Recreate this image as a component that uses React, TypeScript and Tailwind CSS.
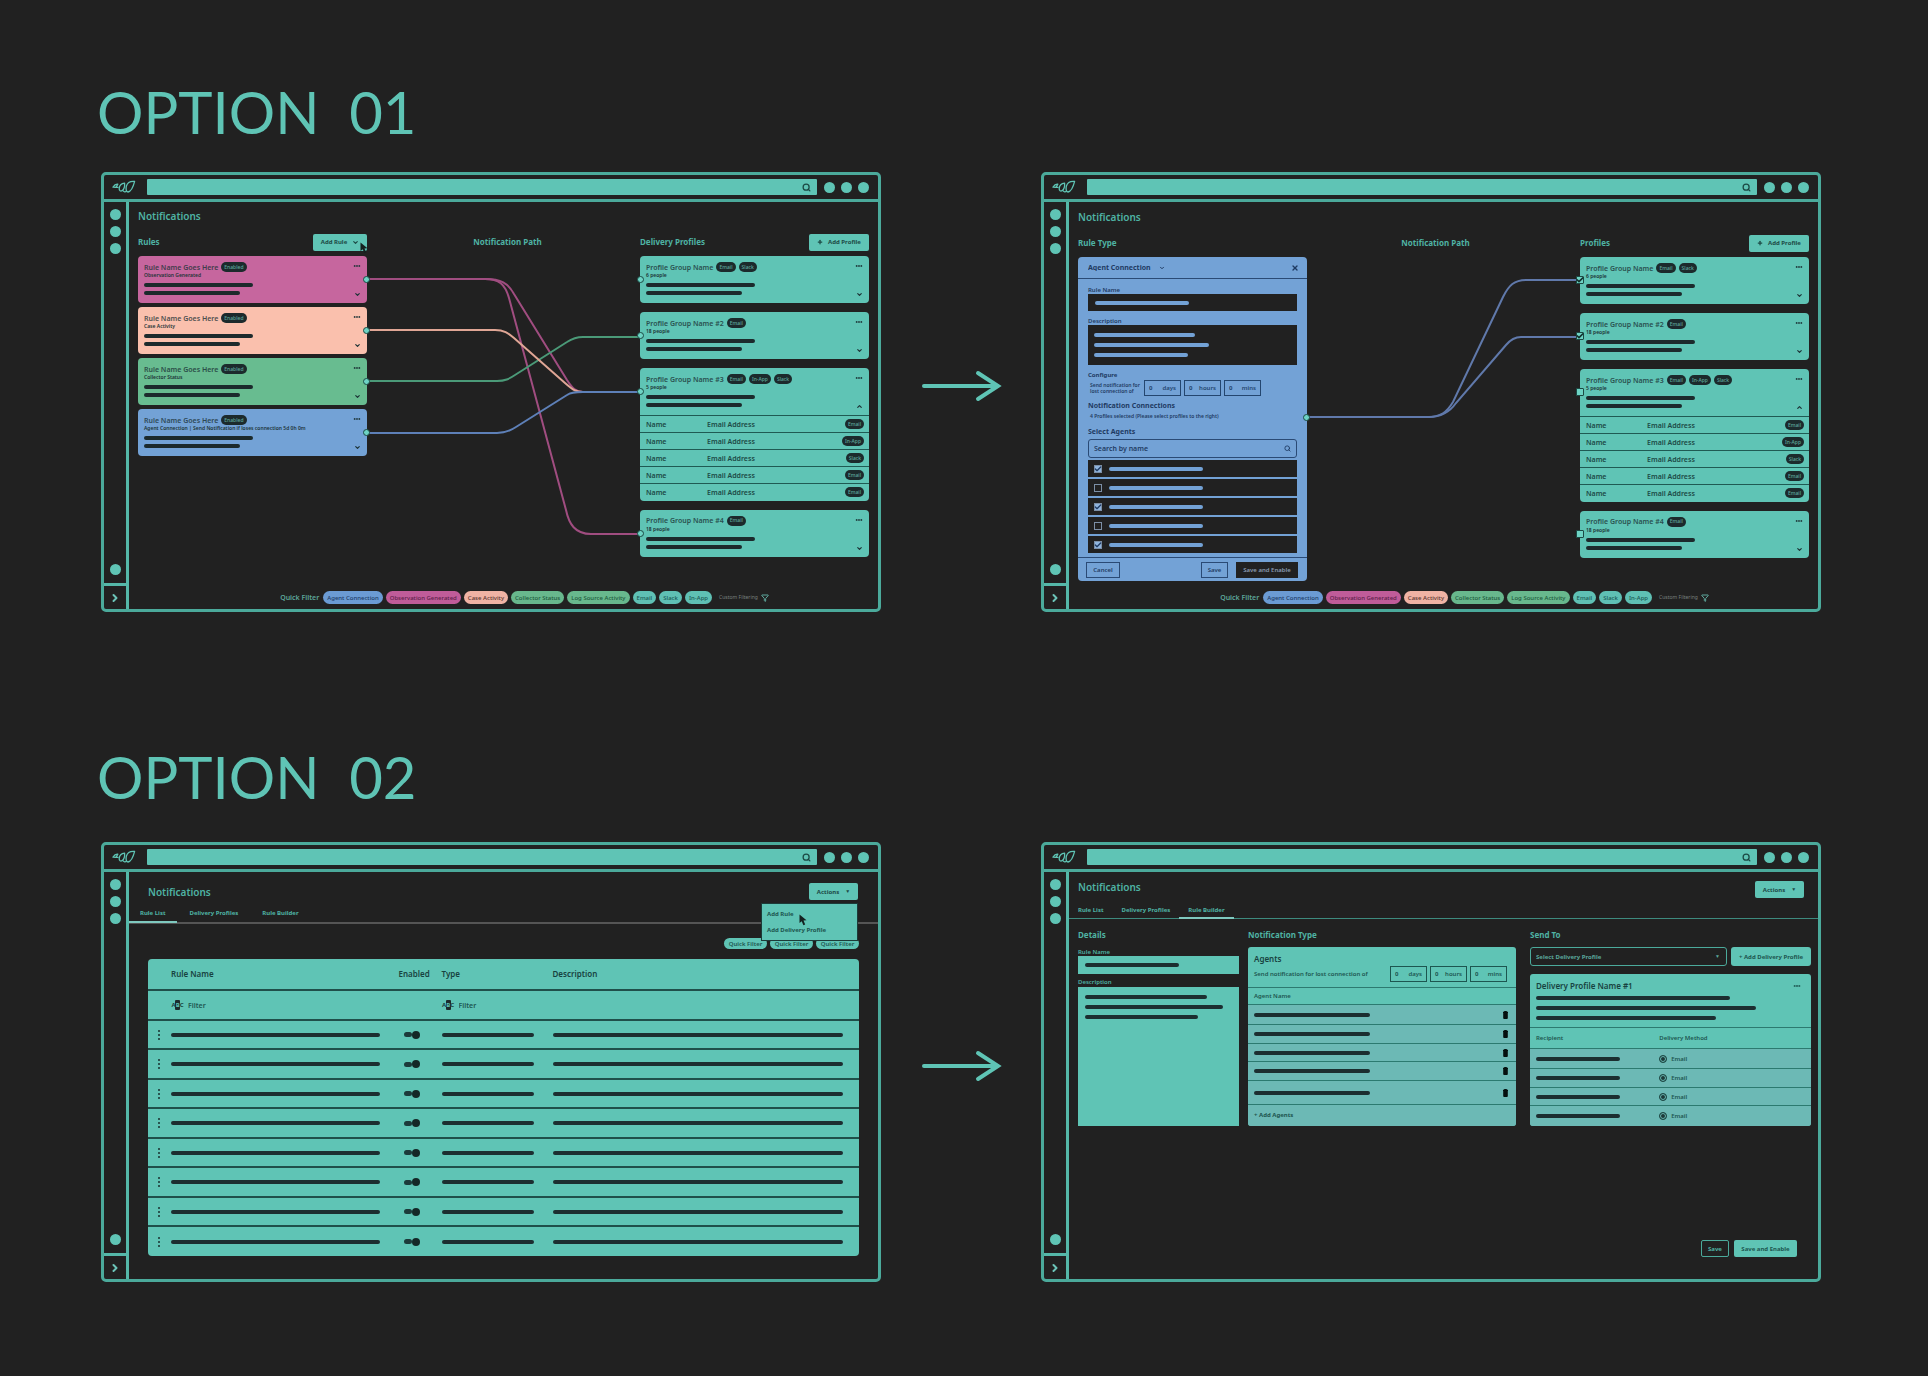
import React from 'react';
import { Check, ChevronDown, ChevronRight, ChevronUp, Filter, MoreHorizontal, Plus, Search, X } from 'lucide-react';

/* ---------- small shared pieces ---------- */

function Bar({ className = '' }: { className?: string }) {
  return <div className={`h-1 max-w-full rounded-full ${className}`} />;
}

function Pill({ children }: { children: React.ReactNode }) {
  return (
    <span className="inline-flex h-[10px] items-center rounded-full bg-[#1c2a2c] px-[3px] text-[5px] leading-none font-medium text-[#5fa89d]">
      {children}
    </span>
  );
}

function Dot() {
  return <span className="block size-[11px] rounded-full bg-[#5fc4b5]" />;
}

function Cursor({ className }: { className: string }) {
  return (
    <svg viewBox="0 0 8 12" className={`pointer-events-none absolute h-3 w-2 ${className}`} aria-hidden>
      <path d="M0.5 0.5 L0.5 9 L2.7 7.2 L4.4 11.3 L6.2 10.5 L4.5 6.6 L7.5 6.3 Z" fill="#14211f" />
    </svg>
  );
}

function Logo() {
  return (
    <svg viewBox="0 0 24 14" className="h-[14px] w-6" fill="none" stroke="#5fc4b5" strokeWidth="1.3" strokeLinejoin="round" aria-label="Logo">
      <path d="M1 7.2 C2.5 4.8 4.5 4 5.8 4.2 C5.2 5.4 4.6 6.4 3.6 7.4 Z M3.8 7.2 L6.6 7.4" />
      <path d="M12.6 3.2 C9.4 3.6 7.4 6 7.2 8.4 C7 10.6 8.6 11.8 10.2 10.6 C12.2 9.2 12.8 6.4 12.6 3.2 Z" />
      <path d="M22.6 1.4 C18.4 1 15.4 2.6 14.4 6 C13.6 9 14.2 11.8 16 12 C18.6 11.6 21.2 7 22.6 1.4 Z" />
      <path d="M11 10.6 C11.6 12 13.4 12.4 14.6 11" />
    </svg>
  );
}

function Arrow({ className = '' }: { className?: string }) {
  return (
    <div className={`flex justify-center self-center ${className}`}>
      <svg viewBox="0 0 82 36" className="h-9 w-[82px]" fill="none" stroke="#5fc4b5" strokeWidth="4" strokeLinecap="round" aria-hidden>
        <path d="M4 18 H77" />
        <path d="M58 5 L78 18 L58 31" strokeLinejoin="miter" />
      </svg>
    </div>
  );
}

function ActionButton({ children, className = '' }: { children: React.ReactNode; className?: string }) {
  return (
    <button type="button" className={`flex h-[17px] items-center justify-center rounded-[2px] bg-[#5fc4b5] text-[6px] leading-none font-bold text-[#1d4a46] ${className}`}>
      {children}
    </button>
  );
}

/* ---------- app window ---------- */

function AppWindow({ children, name }: { children: React.ReactNode; name: string }) {
  return (
    <div className="flex min-h-[440px] min-w-0 flex-col rounded-[5px] border-[3px] border-[#4baa9b]">
      <header className="flex h-[27px] items-center border-b-[3px] border-[#4baa9b] pr-[9px] pl-2">
        <Logo />
        <label className="ml-[11px] flex h-4 flex-1 items-center rounded-[1px] bg-[#5fc4b5] pr-[6px]">
          <input type="text" aria-label={`Search ${name}`} className="h-4 min-w-0 flex-1 bg-transparent px-2 text-[8px] outline-none" />
          <Search className="size-[9px] text-[#1b4a45]" strokeWidth={3.4} />
        </label>
        <div className="ml-[7px] flex gap-[6px]">
          <Dot />
          <Dot />
          <Dot />
        </div>
      </header>
      <div className="flex flex-1">
        <nav className="flex w-[25px] flex-col items-center border-r-[3px] border-[#55b8a9]" aria-label={`${name} sections`}>
          <div className="mt-[7px] flex flex-col gap-[6px]">
            <Dot />
            <Dot />
            <Dot />
          </div>
          <div className="mt-auto mb-2">
            <Dot />
          </div>
          <button type="button" aria-label="Expand" className="flex h-[26px] w-full items-center justify-center border-t-[3px] border-[#55b8a9] text-[#6cc4b8]">
            <ChevronRight className="size-3" strokeWidth={4} />
          </button>
        </nav>
        <main className="flex min-w-0 flex-1 flex-col">{children}</main>
      </div>
    </div>
  );
}

function Title() {
  return <h2 className="h-3 text-[10px] leading-3 font-semibold text-[#4fb3a4]">Notifications</h2>;
}

function Heading({ children }: { children: React.ReactNode }) {
  return <h3 className="text-[8px] leading-[10px] font-bold text-[#4fb3a4]">{children}</h3>;
}

const quickFilters = [
  { label: 'Agent Connection', color: 'bg-[#6b9bd4] text-[#1d3c68]' },
  { label: 'Observation Generated', color: 'bg-[#c05c99] text-[#5f1e4a]' },
  { label: 'Case Activity', color: 'bg-[#f0b3a4] text-[#5c3730]' },
  { label: 'Collector Status', color: 'bg-[#68b88d] text-[#1e5a3c]' },
  { label: 'Log Source Activity', color: 'bg-[#68b88d] text-[#1e5a3c]' },
  { label: 'Email', color: 'bg-[#5fc0b4] text-[#1a5a54]' },
  { label: 'Slack', color: 'bg-[#5fc0b4] text-[#1a5a54]' },
  { label: 'In-App', color: 'bg-[#5fc0b4] text-[#1a5a54]' },
];

function QuickFilters() {
  return (
    <footer className="mt-auto flex items-center justify-center gap-[3px] pb-[5px] pl-[42px]">
      <span className="mr-px text-[7px] leading-none font-semibold text-[#5da69a]">Quick Filter</span>
      {quickFilters.map((f) => (
        <button key={f.label} type="button" className={`h-[13px] rounded-full px-1 text-[6px] leading-none font-medium whitespace-nowrap ${f.color}`}>
          {f.label}
        </button>
      ))}
      <button type="button" className="ml-1 flex items-center gap-[3px] text-[5px] leading-none text-[#78807f]">
        Custom Filtering
        <Filter className="size-2 text-[#5fa89d]" strokeWidth={3} />
      </button>
    </footer>
  );
}

/* ---------- option 01 ---------- */

function CardSummary({ title, subtitle, pills, open = false }: { title: string; subtitle: string; pills: string[]; open?: boolean }) {
  return (
    <div className="flex h-[47px] justify-between pt-[6px] pr-[6px] pl-[6px] text-[#1c3336]">
      <div className="min-w-0">
        <div className="flex h-[10px] items-center gap-[3px]">
          <h4 className="text-[7px] leading-none font-semibold whitespace-nowrap opacity-80">{title}</h4>
          {pills.map((p) => (
            <Pill key={p}>{p}</Pill>
          ))}
        </div>
        <p className="h-[6px] text-[5px] leading-[6px] font-semibold whitespace-nowrap">{subtitle}</p>
        <Bar className="mt-[5px] w-[109px] bg-[#1c2a2c]" />
        <Bar className="mt-1 w-24 bg-[#1c2a2c]" />
      </div>
      <div className="flex flex-col items-center justify-between pb-[5px]">
        <button type="button" aria-label={`${title} menu`}>
          <MoreHorizontal className="size-2" strokeWidth={3.5} />
        </button>
        <button type="button" aria-label={`${title} details`}>
          {open ? <ChevronUp className="size-[7px]" strokeWidth={4} /> : <ChevronDown className="size-[7px]" strokeWidth={4} />}
        </button>
      </div>
    </div>
  );
}

const rules = [
  { subtitle: 'Observation Generated', color: 'bg-[#c6669e]' },
  { subtitle: 'Case Activity', color: 'bg-[#fac0ad]' },
  { subtitle: 'Collector Status', color: 'bg-[#68bc90]' },
  { subtitle: 'Agent Connection | Send Notification if loses connection 5d 0h 0m', color: 'bg-[#73a2d6]' },
];

const members = ['Email', 'In-App', 'Slack', 'Email', 'Email'];

const profiles = [
  { title: 'Profile Group Name', people: '6 people', pills: ['Email', 'Slack'], checked: true },
  { title: 'Profile Group Name #2', people: '18 people', pills: ['Email'], checked: true },
  { title: 'Profile Group Name #3', people: '5 people', pills: ['Email', 'In-App', 'Slack'], checked: false, members },
  { title: 'Profile Group Name #4', people: '18 people', pills: ['Email'], checked: false },
];

function Node({ className }: { className: string }) {
  return <span className={`absolute top-5 size-[7px] rounded-full border border-[#1c4a44] bg-[#6ed3c4] ${className}`} />;
}

function NodeCheckbox({ label, checked }: { label: string; checked: boolean }) {
  return (
    <label className="absolute top-[19px] -left-1 block size-2">
      <input type="checkbox" aria-label={label} defaultChecked={checked} className="peer block size-2 appearance-none rounded-[1px] border border-[#1c4a44] bg-[#6ed3c4]" />
      <Check className="pointer-events-none absolute inset-0 hidden size-2 text-[#12302c] peer-checked:block" strokeWidth={5} />
    </label>
  );
}

function ProfileList({ selectable = false }: { selectable?: boolean }) {
  return (
    <div className="flex flex-col gap-[9px]">
      {profiles.map((p) => (
        <article key={p.title} className="relative rounded-[4px] bg-[#5fc4b5]">
          <CardSummary title={p.title} subtitle={p.people} pills={p.pills} open={!!p.members} />
          {p.members && (
            <table className="w-full table-fixed text-left text-[7px] leading-none text-[#1c4a46]">
              <colgroup>
                <col className="w-[67px]" />
                <col />
                <col className="w-8" />
              </colgroup>
              <tbody>
                {p.members.map((m, i) => (
                  <tr key={i} className="h-[17px] border-t border-[#1f5a53]">
                    <td className="pl-[6px] font-semibold">Name</td>
                    <td className="font-semibold">Email Address</td>
                    <td className="pr-[5px] text-right">
                      <div className="flex justify-end">
                        <Pill>{m}</Pill>
                      </div>
                    </td>
                  </tr>
                ))}
              </tbody>
            </table>
          )}
          {selectable ? <NodeCheckbox label={`Connect ${p.title}`} checked={p.checked} /> : <Node className="-left-[3px]" />}
        </article>
      ))}
    </div>
  );
}

function ColumnHead({ title, className = 'justify-between', children }: { title: string; className?: string; children?: React.ReactNode }) {
  return (
    <div className={`mb-[5px] flex h-[18px] items-center ${className}`}>
      <Heading>{title}</Heading>
      {children}
    </div>
  );
}

function AddProfile() {
  return (
    <ActionButton className="w-[60px] gap-[5px]">
      <Plus className="size-[6px]" strokeWidth={5} />
      Add Profile
    </ActionButton>
  );
}

function RulesOverview() {
  return (
    <>
      <div className="pt-2 pl-[9px]">
        <Title />
      </div>
      <div className="mt-[11px] grid grid-cols-[229fr_273fr_229fr] pr-[9px] pl-[9px]">
        <section>
          <ColumnHead title="Rules">
            <div className="relative">
              <ActionButton className="w-[54px] gap-[5px]">
                Add Rule
                <ChevronDown className="size-[7px]" strokeWidth={4} />
              </ActionButton>
              <Cursor className="top-2 -right-px z-10" />
            </div>
          </ColumnHead>
          <div className="flex flex-col gap-1">
            {rules.map((r) => (
              <article key={r.subtitle} className={`relative rounded-[4px] ${r.color}`}>
                <CardSummary title="Rule Name Goes Here" subtitle={r.subtitle} pills={['Enabled']} />
                <Node className="-right-[3px]" />
              </article>
            ))}
          </div>
        </section>
        <section>
          <ColumnHead title="Notification Path" className="justify-center pl-2" />
          <svg viewBox="0 0 273 302" preserveAspectRatio="none" className="h-[302px] w-full" fill="none" strokeWidth="2" aria-hidden>
            <path d="M0 23 H118 C134 23 141 27 147 38 L200 124 C206 133 209 136 216 136" stroke="#a04d80" />
            <path d="M0 23 H118 C132 23 138 28 142 42 L199 254 C202 268 208 278 224 278 H273" stroke="#a04d80" />
            <path d="M0 125 H130 C138 125 142 123 148 119 L200 86 C206 82 210 81 216 81 H273" stroke="#4b9a78" />
            <path d="M0 74 H128 C137 74 141 77 147 82 L198 127 C206 134 209 136 216 136" stroke="#e0a695" />
            <path d="M0 177 H130 C138 177 143 175 149 171 L200 139 C204 136 209 136 216 136 H273" stroke="#5e80b8" />
          </svg>
        </section>
        <section>
          <ColumnHead title="Delivery Profiles">
            <AddProfile />
          </ColumnHead>
          <ProfileList />
        </section>
      </div>
      <QuickFilters />
    </>
  );
}

function DurationInputs({ className }: { className: string }) {
  return (
    <div className={`flex gap-[3px] ${className}`}>
      {['days', 'hours', 'mins'].map((unit) => (
        <label key={unit} className="flex h-4 w-[37px] items-center justify-between border border-current px-1 text-[6px] leading-none font-semibold">
          <input type="text" defaultValue="0" className="w-2 min-w-0 bg-transparent font-bold outline-none" />
          {unit}
        </label>
      ))}
    </div>
  );
}

const agents = [true, false, true, false, true];

function RuleForm() {
  return (
    <form className="relative flex h-[324px] flex-col rounded-[4px] bg-[#73a2d6] text-[6px] leading-none font-semibold text-[#1f3b63]">
      <div className="flex h-[22px] items-center justify-between border-b border-[#2a4a75] pr-2 pl-[10px]">
        <div className="flex items-center gap-2">
          <select aria-label="Rule type" className="appearance-none bg-transparent text-[7px] leading-none font-bold outline-none">
            <option>Agent Connection</option>
          </select>
          <ChevronDown className="size-[6px]" strokeWidth={4} />
        </div>
        <button type="button" aria-label="Close">
          <X className="size-2" strokeWidth={4} />
        </button>
      </div>
      <div className="flex flex-col px-[10px] pt-[7px]">
        <label htmlFor="rule-name" className="h-2 leading-2">Rule Name</label>
        <div className="relative flex h-[17px] items-center bg-[#212121] pl-[7px]">
          <input id="rule-name" type="text" className="absolute inset-0 w-full bg-transparent px-2 outline-none" />
          <Bar className="w-[94px] bg-[#73a2d6]" />
        </div>
        <label htmlFor="rule-description" className="mt-[6px] h-2 leading-2">Description</label>
        <div className="relative flex h-10 flex-col justify-center gap-[6px] bg-[#212121] pl-[6px]">
          <textarea id="rule-description" className="absolute inset-0 w-full resize-none bg-transparent px-2 outline-none" />
          <Bar className="w-[101px] bg-[#73a2d6]" />
          <Bar className="w-[115px] bg-[#73a2d6]" />
          <Bar className="w-[94px] bg-[#73a2d6]" />
        </div>
        <h4 className="mt-[7px] h-2 font-bold">Configure</h4>
        <div className="flex h-4 items-center">
          <p className="w-[56px] pl-[2px] text-[5px] leading-[6px] whitespace-nowrap">
            Send notification for
            <br />
            lost connection of
          </p>
          <DurationInputs className="text-[#24466f]" />
        </div>
        <h4 className="mt-[6px] h-2 text-[7px] leading-2 font-bold">Notification Connections</h4>
        <p className="mt-[2px] h-2 pl-[2px] text-[5px] leading-2">4 Profiles selected (Please select profiles to the right)</p>
        <h4 className="mt-2 h-2 text-[7px] leading-2 font-bold">Select Agents</h4>
        <label className="mt-[3px] flex h-[19px] items-center rounded-[3px] border border-[#2a4a75] px-[5px]">
          <input type="text" aria-label="Search agents" placeholder="Search by name" className="min-w-0 flex-1 bg-transparent text-[7px] outline-none placeholder:text-[#1f3b63]" />
          <Search className="size-[7px]" strokeWidth={3} />
        </label>
        <div className="mt-[2px] flex flex-col gap-[2px]">
          {agents.map((on, i) => (
            <label key={i} className="flex h-[17px] items-center bg-[#212121] pl-[6px]">
              <span className="relative block size-2">
                <input type="checkbox" aria-label={`Agent ${i + 1}`} defaultChecked={on} className="peer block size-2 appearance-none border border-[#7c8fa6] checked:bg-[#8fb4dd]" />
                <Check className="pointer-events-none absolute inset-0 hidden size-2 text-[#1f3b63] peer-checked:block" strokeWidth={4} />
              </span>
              <Bar className="ml-[7px] w-[94px] bg-[#73a2d6]" />
            </label>
          ))}
        </div>
      </div>
      <div className="mt-auto flex h-6 items-center border-t border-[#2a4a75] pr-[9px] pl-2">
        <button type="button" className="h-4 w-[34px] border border-[#2a4a75]">Cancel</button>
        <button type="button" className="ml-auto h-4 w-[27px] border border-[#2a4a75]">Save</button>
        <button type="submit" className="ml-2 h-4 w-[62px] bg-[#212121] text-[#8b9db3]">Save and Enable</button>
      </div>
      <span className="absolute top-[157px] -right-[3px] size-[7px] rounded-full border border-[#1c4a44] bg-[#6ed3c4]" />
    </form>
  );
}

function RuleEditor() {
  return (
    <>
      <div className="pt-[9px] pl-[9px]">
        <Title />
      </div>
      <div className="mt-[11px] grid grid-cols-[229fr_273fr_229fr] pr-[9px] pl-[9px]">
        <section>
          <ColumnHead title="Rule Type" />
          <RuleForm />
        </section>
        <section>
          <ColumnHead title="Notification Path" className="justify-center pr-4" />
          <svg viewBox="0 0 273 302" preserveAspectRatio="none" className="h-[302px] w-full" fill="none" stroke="#6079ab" strokeWidth="2" aria-hidden>
            <path d="M0 160 H120 C134 160 140 155 146 145 L196 40 C202 28 207 23 220 23 H273" />
            <path d="M0 160 H122 C134 160 142 156 149 146 L199 88 C204 82 208 80 214 80 H273" />
          </svg>
        </section>
        <section>
          <ColumnHead title="Profiles">
            <AddProfile />
          </ColumnHead>
          <ProfileList selectable />
        </section>
      </div>
      <QuickFilters />
    </>
  );
}

/* ---------- option 02 ---------- */

function Tabs({ active, className, tabClassName }: { active: string; className: string; tabClassName: string }) {
  return (
    <div role="tablist" className={`flex ${className}`}>
      {['Rule List', 'Delivery Profiles', 'Rule Builder'].map((t) => (
        <button
          key={t}
          type="button"
          role="tab"
          aria-selected={t === active}
          className={`-mb-px border-b-2 pt-1 text-[6px] leading-none font-bold text-[#4fb3a4] ${tabClassName} ${t === active ? 'border-[#7fc9bf]' : 'border-transparent'}`}
        >
          {t}
        </button>
      ))}
    </div>
  );
}

function ActionsButton() {
  return (
    <ActionButton className="w-[49px] gap-[6px]">
      Actions
      <span className="text-[5px]">▼</span>
    </ActionButton>
  );
}

function AbcFilter({ name }: { name: string }) {
  return (
    <label className="flex items-center gap-1 text-[7px] leading-none font-semibold">
      <span className="relative flex h-[10px] w-[13px] items-center justify-center text-[6px] font-bold">
        <span className="absolute inset-y-0 left-1 w-[5px] rounded-[1px] bg-[#1c2a2c]" />
        <span className="relative">
          A<span className="text-[#5fc4b5]">B</span>C
        </span>
      </span>
      <input type="text" aria-label={`Filter by ${name}`} placeholder="Filter" className="w-16 min-w-0 bg-transparent outline-none placeholder:text-[#1d5650]" />
    </label>
  );
}

function RuleList() {
  return (
    <>
      <div className="flex items-center justify-between pt-[11px] pr-5 pl-[19px]">
        <Title />
        <div className="relative">
          <ActionsButton />
          <div role="menu" className="absolute top-[21px] right-px z-10 flex h-9 w-[95px] flex-col justify-around bg-[#5fc4b5] px-[5px] py-[2px] text-left text-[6px] leading-none font-bold text-[#1d5650] shadow-[0_0_0_1px_#1c3b38]">
            <button type="button" role="menuitem" className="text-left">Add Rule</button>
            <button type="button" role="menuitem" className="text-left">Add Delivery Profile</button>
            <Cursor className="top-[10px] left-[37px]" />
          </div>
        </div>
      </div>
      <Tabs active="Rule List" className="h-6 gap-[2px] border-b-2 border-[#555555]" tabClassName="px-[11px]" />
      <div className="mt-[14px] flex justify-end gap-[3px] pr-[19px]">
        {[1, 2, 3].map((n) => (
          <button key={n} type="button" className="h-[11px] w-[43px] rounded-full bg-[#5fc4b5] text-[6px] leading-none font-semibold text-[#1d5650]">
            Quick Filter
          </button>
        ))}
      </div>
      <div className="mt-[10px] mr-[19px] ml-[19px] overflow-hidden rounded-[4px] bg-[#5fc4b5]">
        <table className="w-full table-fixed text-left text-[8px] leading-none text-[#17423f]">
          <colgroup>
            <col className="w-[23px]" />
            <col className="w-[32%]" />
            <col className="w-[43px]" />
            <col className="w-[111px]" />
            <col />
          </colgroup>
          <thead>
            <tr className="h-[31px] border-b-2 border-[#1f4f4a] font-semibold">
              <th aria-label="Row menu" />
              <th className="font-semibold">Rule Name</th>
              <th className="font-semibold">Enabled</th>
              <th className="font-semibold">Type</th>
              <th className="font-semibold">Description</th>
            </tr>
            <tr className="h-[30px] border-b-2 border-[#1f4f4a]">
              <td />
              <td><AbcFilter name="rule name" /></td>
              <td />
              <td><AbcFilter name="type" /></td>
              <td />
            </tr>
          </thead>
          <tbody>
            {[1, 2, 3, 4, 5, 6, 7, 8].map((n) => (
              <tr key={n} className="h-[29px] border-b-2 border-[#1f4f4a] last:border-b-0 even:h-[30px]">
                <td className="pr-[2px]">
                  <button type="button" aria-label={`Rule ${n} menu`} className="mx-auto flex flex-col gap-[2px]">
                    <span className="size-[2px] rounded-full bg-[#17302f]" />
                    <span className="size-[2px] rounded-full bg-[#17302f]" />
                    <span className="size-[2px] rounded-full bg-[#17302f]" />
                  </button>
                </td>
                <td className="pr-[19px]"><Bar className="bg-[#1c2e30]" /></td>
                <td>
                  <label className="relative ml-[5px] flex w-4 items-center">
                    <input type="checkbox" aria-label={`Rule ${n} enabled`} defaultChecked className="absolute inset-0 appearance-none" />
                    <span className="h-[5px] w-2 rounded-full bg-[#1c3a3a]" />
                    <span className="size-2 rounded-full bg-[#142827]" />
                  </label>
                </td>
                <td className="pr-[19px]"><Bar className="bg-[#1c2e30]" /></td>
                <td className="pr-4"><Bar className="bg-[#1c2e30]" /></td>
              </tr>
            ))}
          </tbody>
        </table>
      </div>
    </>
  );
}

const agentRows = ['h-5', 'h-[19px]', 'h-[18px]', 'h-[19px]', 'h-6'];
const recipientRows = ['h-5', 'h-[19px]', 'h-[18px]', 'h-5'];

function RuleBuilder() {
  return (
    <>
      <div className="flex items-start justify-between pt-[9px] pr-[14px] pl-[9px]">
        <Title />
        <ActionsButton />
      </div>
      <Tabs active="Rule Builder" className="h-[21px] border-b border-[#3d8a7e]" tabClassName="px-[9px]" />
      <div className="grid grid-cols-[161fr_268fr_286fr] gap-[9px] pt-[11px] pr-[7px] pl-[9px]">
        <section className="flex flex-col text-[6px] leading-2 font-semibold text-[#4fb3a4]">
          <Heading>Details</Heading>
          <label htmlFor="builder-name" className="mt-2 h-2">Rule Name</label>
          <div className="relative flex h-[18px] items-center bg-[#5fc4b5] pl-[7px]">
            <input id="builder-name" type="text" className="absolute inset-0 w-full bg-transparent px-2 outline-none" />
            <Bar className="w-[94px] bg-[#1c2e30]" />
          </div>
          <label htmlFor="builder-description" className="mt-1 h-[9px]">Description</label>
          <div className="relative flex flex-1 flex-col gap-[6px] bg-[#5fc4b5] pt-2 pl-[7px]">
            <textarea id="builder-description" className="absolute inset-0 w-full resize-none bg-transparent px-2 outline-none" />
            <Bar className="w-[122px] bg-[#1c2e30]" />
            <Bar className="w-[138px] bg-[#1c2e30]" />
            <Bar className="w-[113px] bg-[#1c2e30]" />
          </div>
        </section>

        <section>
          <Heading>Notification Type</Heading>
          <div className="mt-[7px] overflow-hidden rounded-[3px] bg-[#5fc4b5] text-[6px] leading-none font-semibold text-[#1d5650]">
            <div className="h-10 pt-[6px] pr-[9px] pl-[6px]">
              <h4 className="h-3 text-[8px] leading-3 font-semibold text-[#17423f]">Agents</h4>
              <div className="mt-px flex h-4 items-center justify-between">
                <p>Send notification for lost connection of</p>
                <DurationInputs className="text-[#1d5650]" />
              </div>
            </div>
            <table className="w-full text-left">
              <thead>
                <tr className="h-[17px] border-t border-[#2c7a70]">
                  <th className="pl-[6px] font-semibold">Agent Name</th>
                  <th aria-label="Remove" />
                </tr>
              </thead>
              <tbody className="bg-[#6cb9b5]">
                {agentRows.map((h, i) => (
                  <tr key={i} className={`border-t border-[#2c7a70] ${h}`}>
                    <td className="pl-[6px]"><Bar className="w-[116px] bg-[#1c2e30]" /></td>
                    <td className="w-[13px]">
                      <button type="button" aria-label={`Remove agent ${i + 1}`} className="block">
                        <svg viewBox="0 0 5 8" className="h-2 w-[5px]" aria-hidden>
                          <path d="M1.4 0 H3.6 L4 0.8 H5 V2 H4.8 V7.2 L4.2 8 H0.8 L0.2 7.2 V2 H0 V0.8 H1 Z" fill="#05100f" />
                        </svg>
                      </button>
                    </td>
                  </tr>
                ))}
                <tr className="h-[21px] border-t border-[#2c7a70]">
                  <td colSpan={2} className="pl-[6px]">
                    <button type="button" className="font-bold">+ Add Agents</button>
                  </td>
                </tr>
              </tbody>
            </table>
          </div>
        </section>

        <section className="pl-[5px] text-[6px] leading-none font-semibold text-[#1d5650]">
          <Heading>Send To</Heading>
          <div className="mt-[7px] flex h-[19px] gap-1">
            <div className="relative flex-1">
              <select aria-label="Select Delivery Profile" className="h-full w-full appearance-none rounded-[3px] border border-[#4baa9b] bg-transparent px-[5px] font-bold text-[#5aa79b] outline-none">
                <option>Select Delivery Profile</option>
              </select>
              <span className="pointer-events-none absolute top-[7px] right-[7px] text-[5px] text-[#5aa79b]">▼</span>
            </div>
            <button type="button" className="w-20 rounded-[3px] bg-[#5fc4b5] font-bold">+ Add Delivery Profile</button>
          </div>
          <div className="mt-2 overflow-hidden rounded-[3px] bg-[#5fc4b5]">
            <div className="h-[53px] pt-[6px] pr-[10px] pl-[6px]">
              <div className="flex h-3 items-center justify-between">
                <h4 className="text-[8px] font-semibold text-[#17423f]">Delivery Profile Name #1</h4>
                <button type="button" aria-label="Delivery profile menu">
                  <MoreHorizontal className="size-2" strokeWidth={4} />
                </button>
              </div>
              <Bar className="mt-1 w-[194px] bg-[#1c2e30]" />
              <Bar className="mt-[6px] w-[220px] bg-[#1c2e30]" />
              <Bar className="mt-[6px] w-[180px] bg-[#1c2e30]" />
            </div>
            <table className="w-full table-fixed text-left">
              <colgroup>
                <col className="w-[46%]" />
                <col />
              </colgroup>
              <thead>
                <tr className="h-[21px] border-t border-[#2c7a70]">
                  <th className="pl-[6px] font-semibold">Recipient</th>
                  <th className="font-semibold">Delivery Method</th>
                </tr>
              </thead>
              <tbody className="bg-[#6cb9b5]">
                {recipientRows.map((h, i) => (
                  <tr key={i} className={`border-t border-[#2c7a70] ${h}`}>
                    <td className="pl-[6px]"><Bar className="w-[84px] bg-[#1c2e30]" /></td>
                    <td>
                      <label className="flex items-center gap-1">
                        <input
                          type="radio"
                          name={`method-${i}`}
                          defaultChecked
                          className="size-2 appearance-none rounded-full border border-[#1d4a46] checked:bg-[#1d3a39] checked:shadow-[inset_0_0_0_1px_#6cb9b5]"
                        />
                        Email
                      </label>
                    </td>
                  </tr>
                ))}
              </tbody>
            </table>
          </div>
        </section>
      </div>
      <div className="mt-auto flex justify-end gap-[5px] pr-[21px] pb-[22px] text-[6px] leading-none font-bold">
        <button type="button" className="h-[17px] w-7 rounded-[2px] border border-[#4baa9b] text-[#4fb3a4]">Save</button>
        <button type="submit" className="h-[17px] w-[63px] rounded-[2px] bg-[#5fc4b5] text-[#1d5650]">Save and Enable</button>
      </div>
    </>
  );
}

function OptionTitle({ n, className }: { n: string; className: string }) {
  return (
    <h1 className={`-ml-1 font-['Lato',sans-serif] text-[58px] leading-[60px] font-normal whitespace-pre text-[#5fc4b5] ${className}`}>
      {`OPTION  ${n}`}
    </h1>
  );
}

export default function App() {
  return (
    <div className="min-h-screen bg-[#212121] pt-[82px] pr-[107px] pb-[93px] pl-[101px] font-['Noto_Sans',sans-serif]">
      <OptionTitle n="01" className="mb-[30px]" />
      <div className="grid grid-cols-[1fr_160px_1fr]">
        <AppWindow name="rules">
          <RulesOverview />
        </AppWindow>
        <Arrow className="pb-3" />
        <AppWindow name="rule editor">
          <RuleEditor />
        </AppWindow>
      </div>

      <OptionTitle n="02" className="mt-[135px] mb-[35px]" />
      <div className="grid grid-cols-[1fr_160px_1fr]">
        <AppWindow name="rule list">
          <RuleList />
        </AppWindow>
        <Arrow className="pt-2" />
        <AppWindow name="rule builder">
          <RuleBuilder />
        </AppWindow>
      </div>
    </div>
  );
}
